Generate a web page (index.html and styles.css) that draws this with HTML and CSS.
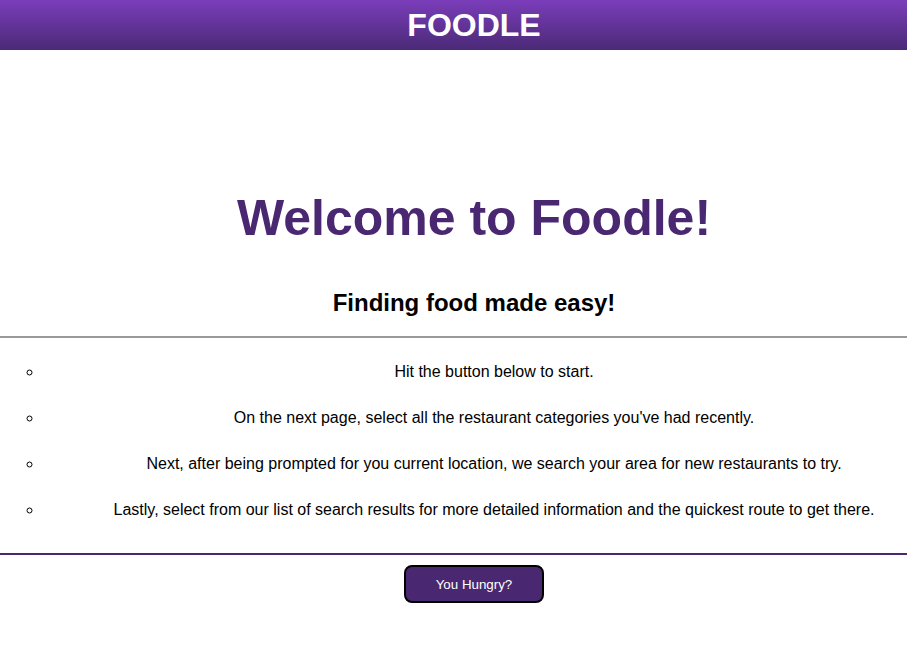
FILE: index.html
```html
<!DOCTYPE html>
<html>
<head>
<meta charset="utf-8">
<link rel="stylesheet" href="styles.css">
</head>
<body>
<div class="page">
  <header class="topbar"><span class="brand">FOODLE</span></header>
  <main class="intro">
    <h1 class="title">Welcome to Foodle!</h1>
    <h2 class="subtitle">Finding food made easy!</h2>
  </main>
  <ul class="steps">
    <li>Hit the button below to start.</li>
    <li>On the next page, select all the restaurant categories you've had recently.</li>
    <li>Next, after being prompted for you current location, we search your area for new restaurants to try.</li>
    <li>Lastly, select from our list of search results for more detailed information and the quickest route to get there.</li>
  </ul>
  <div class="action">
    <button class="go">You Hungry?</button>
  </div>
</div>
</body>
</html>
```
FILE: styles.css
```css
html, body {
  margin: 0;
  padding: 0;
  overflow: hidden;
}
body {
  font-family: "Liberation Sans", Arial, sans-serif;
  background: #fff;
  color: #000;
}
.page {
  width: 948px;
}
.topbar {
  height: 50px;
  background: linear-gradient(to bottom, #7b3dba, #4a2a76);
  display: flex;
  align-items: center;
  justify-content: center;
}
.brand {
  color: #fff;
  font-weight: bold;
  font-size: 32px;
}
.intro {
  text-align: center;
  padding-top: 139px;
}
.title {
  margin: 0;
  font-size: 50px;
  font-weight: bold;
  color: #4a2871;
}
.subtitle {
  margin: 42px 0 0;
  font-size: 24px;
  font-weight: bold;
}
.steps {
  margin: 19px 0 0;
  border-top: 2px solid #9a9a9a;
  border-bottom: 2px solid #4a2871;
  padding: 25px 3px 34px 43px;
  list-style: circle;
  text-align: center;
  font-size: 16px;
}
.steps li {
  line-height: 18px;
  margin-bottom: 28px;
}
.steps li:last-child {
  margin-bottom: 0;
}
.action {
  display: flex;
  justify-content: center;
  padding-top: 10px;
}
.go {
  width: 140px;
  height: 38px;
  background: #4a2871;
  color: #fff;
  border: 2px solid #000;
  border-radius: 8px;
  font-family: "Liberation Sans", Arial, sans-serif;
  font-size: 13.33px;
}
```
